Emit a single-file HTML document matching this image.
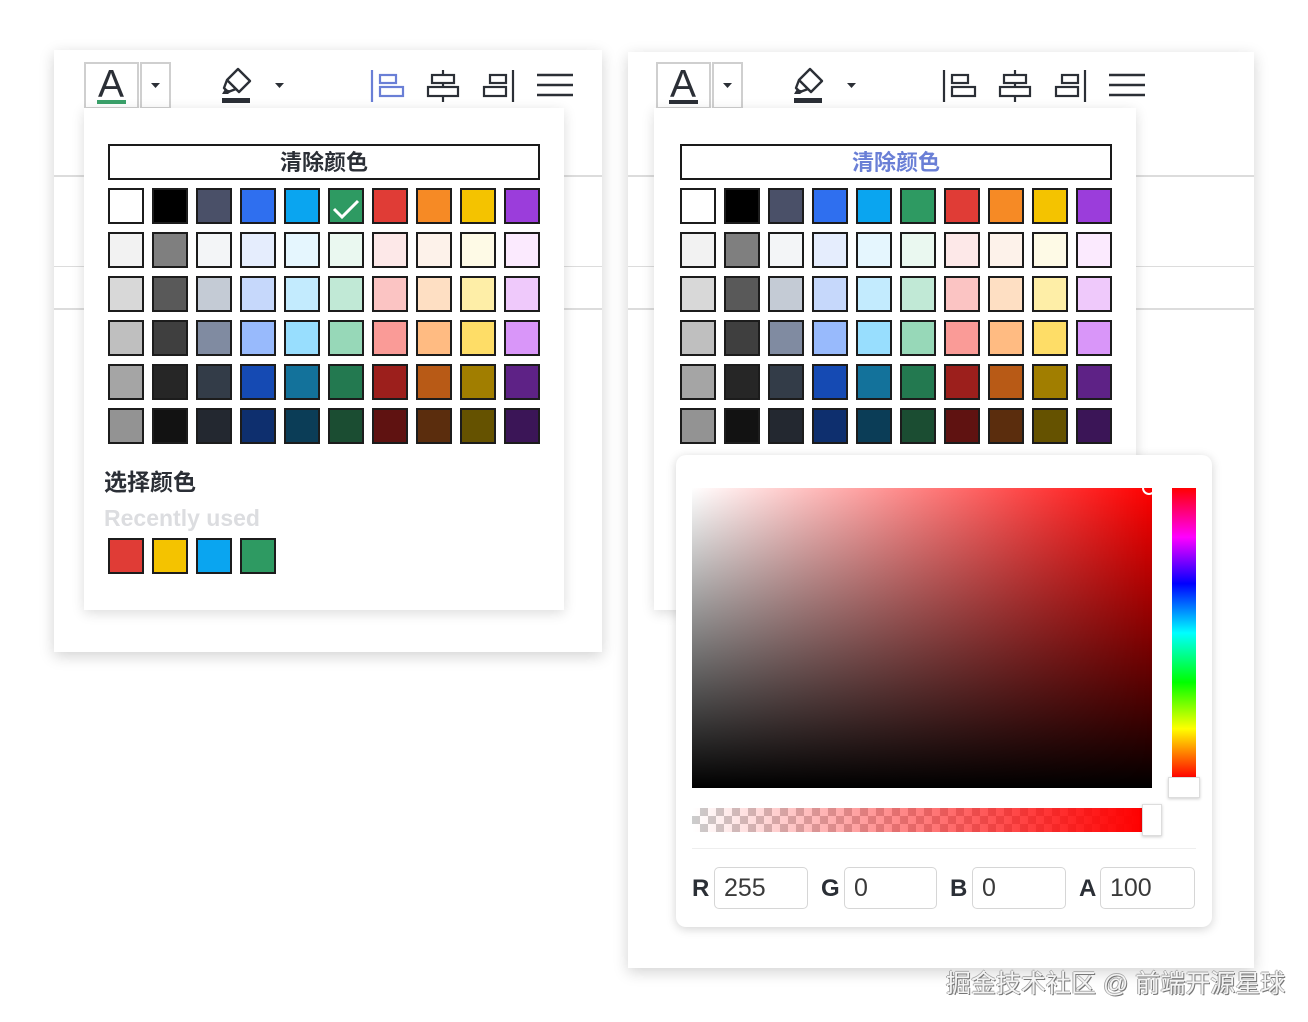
<!DOCTYPE html>
<html><head><meta charset="utf-8"><style>
*{box-sizing:border-box;margin:0;padding:0}
body{width:1308px;height:1022px;background:#fff;position:relative;overflow:hidden;font-family:"Liberation Sans","Noto Sans CJK SC",sans-serif}
.abs{position:absolute}
.card{position:absolute;background:#fff;box-shadow:0 4px 14px rgba(0,0,0,.18)}
.line{position:absolute;height:2px;background:#dcdcdc}
.drop{position:absolute;background:#fff;box-shadow:0 3px 12px rgba(0,0,0,.14)}
.clear{position:absolute;border:2px solid #1a1a1a;height:36px;font-size:22px;font-weight:bold;text-align:center;line-height:34px;color:#2b2f36;background:#fff}
.grid{position:absolute;display:grid;grid-template-columns:repeat(10,36px);grid-auto-rows:36px;gap:8px}
.grid div,.rec div{border:2px solid #1c1c1c;width:36px;height:36px}
.rec{position:absolute;display:flex;gap:8px}
.inp{position:absolute;top:867px;height:42px;border:1.5px solid #d6d6d6;border-radius:5px;font-size:25px;color:#3a3a3a;padding-left:9px;line-height:40px}
.lab{position:absolute;top:875px;font-size:24px;font-weight:bold;color:#2b2f36}
</style></head><body>

<div class="card" style="left:54px;top:50px;width:548px;height:602px"></div>
<div class="line" style="left:54px;top:175px;width:548px"></div>
<div class="line" style="left:54px;top:266px;width:548px;height:1px"></div>
<div class="line" style="left:54px;top:308px;width:548px"></div>

<div class="card" style="left:628px;top:52px;width:626px;height:916px"></div>
<div class="line" style="left:628px;top:175px;width:626px"></div>
<div class="line" style="left:628px;top:266px;width:626px;height:1px"></div>
<div class="line" style="left:628px;top:308px;width:626px"></div>

<svg class="abs" style="left:0;top:0" width="1308" height="120">
 <g>
  <rect x="85" y="63" width="53" height="45" fill="none" stroke="#cfcfcf" stroke-width="2"/>
  <rect x="141" y="63" width="29" height="45" fill="none" stroke="#cfcfcf" stroke-width="2"/>
  <text x="98" y="97" font-family="Liberation Sans" font-size="39" fill="#2b2f36">A</text>
  <rect x="97" y="100" width="29" height="4" fill="#3aa16a"/>
  <path d="M151 83h9l-4.5 5z" fill="#2b2f36"/>
  <path d="M238 69l12 12-11 11-12-12z M227 80l-3 8 4 4 8-3" fill="none" stroke="#2b2f36" stroke-width="2.4" stroke-linejoin="round"/>
  <path d="M232 85l5 5" stroke="#2b2f36" stroke-width="2"/>
  <path d="M225 89l-3 5 6 0 4-3z" fill="#2b2f36"/>
  <rect x="222" y="98" width="28" height="5" fill="#2b2f36"/>
  <path d="M275 83h9l-4.5 5z" fill="#2b2f36"/>
  <g stroke="#6a7fd6" stroke-width="2.2" fill="none"><path d="M372 70v32"/><rect x="380" y="75" width="16" height="8"/><rect x="380" y="87" width="23" height="9"/></g>
  <g stroke="#2b2f36" stroke-width="2.2" fill="none"><path d="M443 70v32"/><rect x="432" y="75" width="22" height="8" fill="#fff"/><rect x="428" y="87" width="30" height="9" fill="#fff"/></g>
  <g stroke="#2b2f36" stroke-width="2.2" fill="none"><path d="M513 70v32"/><rect x="490" y="75" width="16" height="8"/><rect x="484" y="87" width="22" height="9"/></g>
  <g stroke="#2b2f36" stroke-width="2.4"><path d="M537 75h36M537 85h36M537 95h36"/></g>
 </g>
 <g transform="translate(572,0)">
  <rect x="85" y="63" width="53" height="45" fill="none" stroke="#cfcfcf" stroke-width="2"/>
  <rect x="141" y="63" width="29" height="45" fill="none" stroke="#cfcfcf" stroke-width="2"/>
  <text x="98" y="97" font-family="Liberation Sans" font-size="39" fill="#2b2f36">A</text>
  <rect x="97" y="100" width="29" height="4" fill="#2b2f36"/>
  <path d="M151 83h9l-4.5 5z" fill="#2b2f36"/>
  <path d="M238 69l12 12-11 11-12-12z M227 80l-3 8 4 4 8-3" fill="none" stroke="#2b2f36" stroke-width="2.4" stroke-linejoin="round"/>
  <path d="M232 85l5 5" stroke="#2b2f36" stroke-width="2"/>
  <path d="M225 89l-3 5 6 0 4-3z" fill="#2b2f36"/>
  <rect x="222" y="98" width="28" height="5" fill="#2b2f36"/>
  <path d="M275 83h9l-4.5 5z" fill="#2b2f36"/>
  <g stroke="#2b2f36" stroke-width="2.2" fill="none"><path d="M372 70v32"/><rect x="380" y="75" width="16" height="8"/><rect x="380" y="87" width="23" height="9"/></g>
  <g stroke="#2b2f36" stroke-width="2.2" fill="none"><path d="M443 70v32"/><rect x="432" y="75" width="22" height="8" fill="#fff"/><rect x="428" y="87" width="30" height="9" fill="#fff"/></g>
  <g stroke="#2b2f36" stroke-width="2.2" fill="none"><path d="M513 70v32"/><rect x="490" y="75" width="16" height="8"/><rect x="484" y="87" width="22" height="9"/></g>
  <g stroke="#2b2f36" stroke-width="2.4"><path d="M537 75h36M537 85h36M537 95h36"/></g>
 </g>
</svg>

<div class="drop" style="left:84px;top:108px;width:480px;height:502px"></div>
<div class="clear" style="left:108px;top:144px;width:432px">清除颜色</div>
<div class="grid" style="left:108px;top:188px">
<div style="background:#fff"></div><div style="background:#000"></div><div style="background:#4a5068"></div><div style="background:#2f6fef"></div><div style="background:#0aa5f0"></div><div style="background:#2e9a62;position:relative"><svg width="32" height="32" style="position:absolute;left:0;top:0"><path d="M4 19l8 8 16-16" fill="none" stroke="#fff" stroke-width="3"/></svg></div><div style="background:#e03c36"></div><div style="background:#f68a25"></div><div style="background:#f4c300"></div><div style="background:#9b3ddb"></div>
<div style="background:#f2f2f2"></div><div style="background:#7f7f7f"></div><div style="background:#f3f5f7"></div><div style="background:#e5edfd"></div><div style="background:#e5f6fe"></div><div style="background:#eaf8f0"></div><div style="background:#fde8e8"></div><div style="background:#fdf2ea"></div><div style="background:#fefae6"></div><div style="background:#fbeafe"></div>
<div style="background:#d8d8d8"></div><div style="background:#595959"></div><div style="background:#c4cbd5"></div><div style="background:#c6d8fb"></div><div style="background:#c3ebfe"></div><div style="background:#c1e9d6"></div><div style="background:#fbc4c3"></div><div style="background:#fedfc3"></div><div style="background:#feeea7"></div><div style="background:#efc9fb"></div>
<div style="background:#bfbfbf"></div><div style="background:#3f3f3f"></div><div style="background:#808ba1"></div><div style="background:#98bafc"></div><div style="background:#98defe"></div><div style="background:#97d8b8"></div><div style="background:#fa9b97"></div><div style="background:#ffbb82"></div><div style="background:#fedd67"></div><div style="background:#d996f9"></div>
<div style="background:#a5a5a5"></div><div style="background:#262626"></div><div style="background:#333c48"></div><div style="background:#154ab3"></div><div style="background:#13729b"></div><div style="background:#237950"></div><div style="background:#9c1f1c"></div><div style="background:#b85a16"></div><div style="background:#a17e00"></div><div style="background:#5e2286"></div>
<div style="background:#939393"></div><div style="background:#121212"></div><div style="background:#232830"></div><div style="background:#0e2f6e"></div><div style="background:#0b3d57"></div><div style="background:#1b4d32"></div><div style="background:#5f1211"></div><div style="background:#5b2d0d"></div><div style="background:#655200"></div><div style="background:#3b1557"></div>
</div>
<div class="abs" style="left:104px;top:463px;font-size:23px;font-weight:bold;color:#2b2f36">选择颜色</div>
<div class="abs" style="left:104px;top:505px;font-size:23px;font-weight:bold;color:#dcdde0">Recently used</div>
<div class="rec" style="left:108px;top:538px"><div style="background:#e03c36"></div><div style="background:#f4c300"></div><div style="background:#0aa5f0"></div><div style="background:#2e9a62"></div></div>

<div class="drop" style="left:654px;top:108px;width:482px;height:502px"></div>
<div class="clear" style="left:680px;top:144px;width:432px;color:#6a7fd6">清除颜色</div>
<div class="grid" style="left:680px;top:188px">
<div style="background:#fff"></div><div style="background:#000"></div><div style="background:#4a5068"></div><div style="background:#2f6fef"></div><div style="background:#0aa5f0"></div><div style="background:#2e9a62"></div><div style="background:#e03c36"></div><div style="background:#f68a25"></div><div style="background:#f4c300"></div><div style="background:#9b3ddb"></div>
<div style="background:#f2f2f2"></div><div style="background:#7f7f7f"></div><div style="background:#f3f5f7"></div><div style="background:#e5edfd"></div><div style="background:#e5f6fe"></div><div style="background:#eaf8f0"></div><div style="background:#fde8e8"></div><div style="background:#fdf2ea"></div><div style="background:#fefae6"></div><div style="background:#fbeafe"></div>
<div style="background:#d8d8d8"></div><div style="background:#595959"></div><div style="background:#c4cbd5"></div><div style="background:#c6d8fb"></div><div style="background:#c3ebfe"></div><div style="background:#c1e9d6"></div><div style="background:#fbc4c3"></div><div style="background:#fedfc3"></div><div style="background:#feeea7"></div><div style="background:#efc9fb"></div>
<div style="background:#bfbfbf"></div><div style="background:#3f3f3f"></div><div style="background:#808ba1"></div><div style="background:#98bafc"></div><div style="background:#98defe"></div><div style="background:#97d8b8"></div><div style="background:#fa9b97"></div><div style="background:#ffbb82"></div><div style="background:#fedd67"></div><div style="background:#d996f9"></div>
<div style="background:#a5a5a5"></div><div style="background:#262626"></div><div style="background:#333c48"></div><div style="background:#154ab3"></div><div style="background:#13729b"></div><div style="background:#237950"></div><div style="background:#9c1f1c"></div><div style="background:#b85a16"></div><div style="background:#a17e00"></div><div style="background:#5e2286"></div>
<div style="background:#939393"></div><div style="background:#121212"></div><div style="background:#232830"></div><div style="background:#0e2f6e"></div><div style="background:#0b3d57"></div><div style="background:#1b4d32"></div><div style="background:#5f1211"></div><div style="background:#5b2d0d"></div><div style="background:#655200"></div><div style="background:#3b1557"></div>
</div>

<div class="abs" style="left:676px;top:455px;width:536px;height:472px;background:#fff;border-radius:10px;box-shadow:0 2px 10px rgba(0,0,0,.18)"></div>
<div class="abs" style="left:692px;top:488px;width:460px;height:300px;background:linear-gradient(to top,#000,rgba(0,0,0,0)),linear-gradient(to right,#fff,#f00)"></div>
<div class="abs" style="left:1142px;top:481px;width:14px;height:14px;border:2px solid #fff;border-radius:50%"></div>
<div class="abs" style="left:1172px;top:488px;width:24px;height:290px;background:linear-gradient(to bottom,#f00 0%,#f0f 17%,#00f 33%,#0ff 50%,#0f0 67%,#ff0 83%,#f00 100%)"></div>
<div class="abs" style="left:1168px;top:777px;width:32px;height:21px;background:#fff;border:1px solid #ddd;box-shadow:0 1px 3px rgba(0,0,0,.2)"></div>
<div class="abs" style="left:692px;top:808px;width:450px;height:24px;background:linear-gradient(to right,rgba(255,0,0,0),#f00),repeating-conic-gradient(#ccc 0 25%,#fff 0 50%) 0 0/16px 16px"></div>
<div class="abs" style="left:1142px;top:804px;width:20px;height:32px;background:#fff;border:1px solid #ddd;box-shadow:0 1px 3px rgba(0,0,0,.2)"></div>
<div class="abs" style="left:692px;top:848px;width:504px;height:1px;background:#eee"></div>
<div class="lab" style="left:692px">R</div><div class="inp" style="left:714px;width:94px">255</div>
<div class="lab" style="left:821px">G</div><div class="inp" style="left:844px;width:93px">0</div>
<div class="lab" style="left:950px">B</div><div class="inp" style="left:972px;width:94px">0</div>
<div class="lab" style="left:1079px">A</div><div class="inp" style="left:1100px;width:95px">100</div>

<div class="abs" style="left:946px;top:964px;font-size:25px;color:#f4f4f4;text-shadow:1px 1px 0 #777,-1px 0 0 #aaa,0 -1px 0 #aaa;white-space:nowrap">掘金技术社区 @ 前端开源星球</div>
</body></html>
